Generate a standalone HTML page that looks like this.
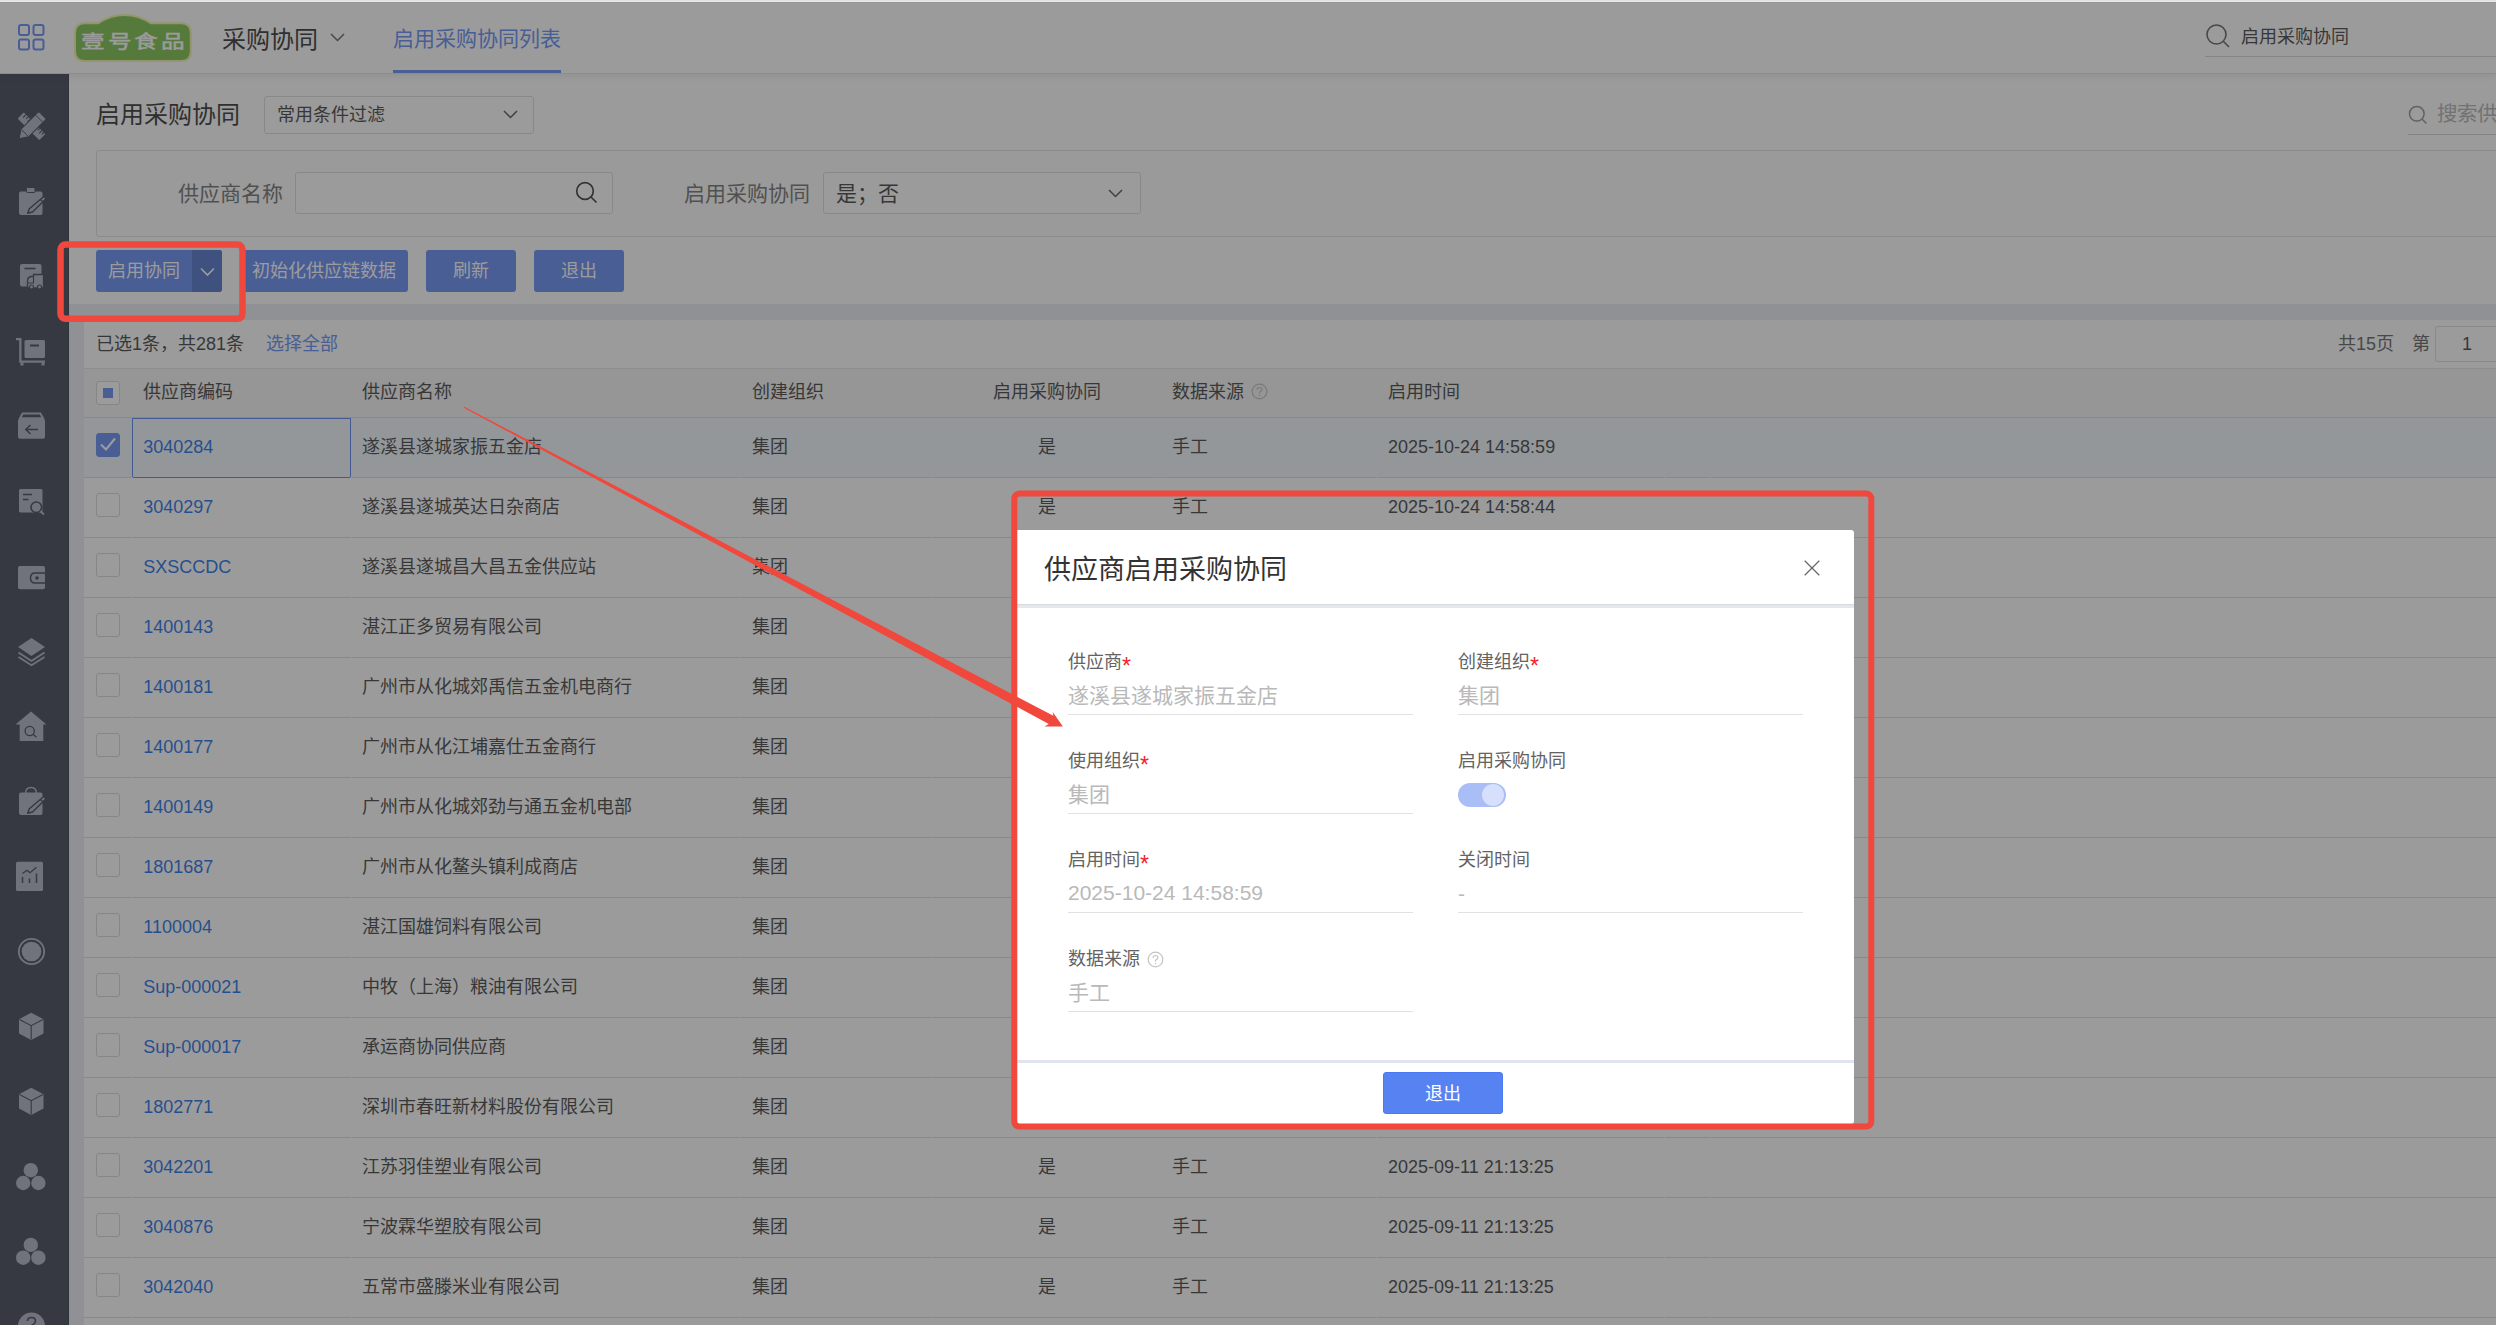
<!DOCTYPE html>
<html lang="zh-CN">
<head>
<meta charset="utf-8">
<title>启用采购协同</title>
<style>
*{box-sizing:border-box;margin:0;padding:0}
html,body{width:2496px;height:1325px;overflow:hidden}
body{position:relative;background:#e8eaf2;font-family:"Liberation Sans",sans-serif;font-size:18px;color:#333;line-height:1}
.abs{position:absolute}
.t{position:absolute;white-space:nowrap;line-height:24px;height:24px}
#strip{left:0;top:0;width:2496px;height:2px;background:linear-gradient(#e1e3e0 50%,#e6e8e5 50%);z-index:50}
#hdr{left:0;top:2px;width:2496px;height:72px;background:#fff;border-top:1px solid #f5f5f5;border-bottom:1px solid #e0e0e0;box-shadow:0 2px 8px rgba(0,0,0,.09);z-index:3}
#side{left:0;top:74px;width:69px;height:1251px;background:#303648;z-index:2;border-right:1px solid #222a3c}
#side svg{position:absolute;left:0;overflow:visible}
#top{left:69px;top:74px;width:2427px;height:230px;background:#fff}
#grid{left:84px;top:320px;width:2412px;height:1005px;background:#fff}
#mask{left:0;top:2px;width:2496px;height:1323px;background:rgba(60,60,60,.512);z-index:20}
.btn{position:absolute;top:250px;height:42px;background:#5582f3;color:#fff;border-radius:3px;text-align:center;line-height:42px;font-size:18px}
.box{position:absolute;border:1px solid #d9d9d9;border-radius:3px;background:#fff}
/* table */
.hrow{position:absolute;left:84px;top:368px;width:2412px;height:50px;background:#f4f4f4;border-top:1px solid #e2e2e2;border-bottom:1px solid #d8d8d8}
.row{position:absolute;left:84px;width:2412px;height:60px;border-bottom:1px solid #d8d8d8}
.row.sel{background:#eef7fd}
.row span,.hrow span{position:absolute;white-space:nowrap;line-height:24px}
.row span{top:17px}
.hrow span{top:11px}
.c1{left:59.300px;color:#0c64e4}
.c2{left:278px}
.c3{left:668px}
.c4{left:849px;width:227px;text-align:center}
.c5{left:1088px}
.c6{left:1304px}
.cb{position:absolute;left:12px;top:15px;width:24px;height:24px;border:1px solid #d4d4d4;border-radius:3px;background:#fff}
/* modal */
#modal{left:1014px;top:530px;width:840px;height:594px;background:#fff;border-radius:3px;z-index:30}
#modal .lab{position:absolute;font-size:18px;line-height:24px;color:#636363;white-space:nowrap}
#modal .lab i{color:#f5222d;font-style:normal;font-size:23px;position:relative;top:6px;line-height:1px}
#modal .val{position:absolute;font-size:21px;line-height:28px;color:#b9b9b9;white-space:nowrap}
#modal .ul{position:absolute;height:1px;background:#e1e1e1;width:345px}
#anno{left:0;top:0;z-index:40}
</style>
</head>
<body>
<div id="strip" class="abs"></div>
<div id="hdr" class="abs"></div>
<div id="hc" class="abs" style="left:0;top:0;z-index:5">
<svg class="abs" style="left:18px;top:24px" width="27" height="27" viewBox="0 0 27 27" fill="none" stroke="#5582f3" stroke-width="2"><rect x="1" y="1" width="10" height="10" rx="2"/><rect x="15.5" y="1" width="10" height="10" rx="2"/><rect x="1" y="15.5" width="10" height="10" rx="2"/><rect x="15.5" y="15.5" width="10" height="10" rx="2"/></svg>
<svg class="abs" style="left:74px;top:13px" width="119" height="50" viewBox="0 0 119 50"><path d="M11 10.300 H24 C33 4.500 42 2 50.500 2 C60 2 68 4.500 77 10.300 H107 Q116.800 10.300 116.800 20 V38.500 Q116.800 48 107 48 H11 Q1 48 1 38.500 V20 Q1 10.300 11 10.300 Z" fill="#6fbb3c" stroke="#eef2a0" stroke-width="2"/><text transform="translate(60.300 27.900) scale(1 .78)" x="0" y="8.500" text-anchor="middle" font-family="'Liberation Serif',serif" font-size="23.600" fill="#fff" stroke="#fff" stroke-width=".55" letter-spacing="3.200">壹号食品</text></svg>
<div class="t" style="left:222px;top:28px;font-size:24px;color:#222">采购协同</div>
<svg class="abs" style="left:330px;top:33px" width="15" height="9" viewBox="0 0 15 9" fill="none" stroke="#555" stroke-width="1.5"><path d="M1 1 L7.500 7.500 L14 1"/></svg>
<div class="t" style="left:393px;top:27px;font-size:21px;color:#5582f3">启用采购协同列表</div>
<div class="abs" style="left:393px;top:70px;width:168px;height:3px;background:#5582f3"></div>
<svg class="abs" style="left:2205px;top:23px" width="26" height="26" viewBox="0 0 26 26" fill="none" stroke="#555" stroke-width="1.600"><circle cx="11.500" cy="11.500" r="9.500"/><path d="M18.500 18.500 L24 24"/></svg>
<div class="t" style="left:2241px;top:25px;font-size:18px;color:#333">启用采购协同</div>
<div class="abs" style="left:2205px;top:56px;width:291px;height:1px;background:#d0d0d0"></div>
</div>
<div id="side" class="abs"><svg width="69" height="1251" viewBox="0 74 69 1251" fill="#a7adbf" stroke="none">
<!-- 1 ruler + pencil -->
<g transform="translate(31.500 126.300) scale(.9)">
 <g transform="rotate(45)"><rect x="-17" y="-4.800" width="34" height="9.600" rx="1"/><g stroke="#303648" stroke-width="1.300"><path d="M-13.500 -4.800v4.500M-10 -4.800v3M-6.500 -4.800v4.500M8 -4.800v3M11.500 -4.800v4.500M14.500 -4.800v3"/></g></g>
 <g transform="rotate(-45)"><path d="M-19.500 0 L-10.500 -6 H16 Q17.500 -6 17.500 -4.500 V4.500 Q17.500 6 16 6 H-10.500 Z" stroke="#303648" stroke-width="1.200"/><path d="M-10.500 -5.500 V5.500 M12 -5.500 V5.500" stroke="#303648" stroke-width="1" fill="none"/></g>
</g>
<!-- 2 clipboard + pencil -->
<g><rect x="19" y="191.500" width="23.500" height="23.500" rx="2"/><rect x="26.500" y="187.500" width="8.500" height="5" rx="1" stroke="#303648" stroke-width="1"/>
 <path d="M43.800 196.500 L46 198.700 L32.500 212 L27.800 213.300 L29.300 208.800 Z" fill="#a7adbf" stroke="#303648" stroke-width="1.500" stroke-linejoin="round"/><path d="M40.500 199.500l2.300 2.300" stroke="#303648" stroke-width="1.200"/></g>
<!-- 3 doc + truck -->
<g><rect x="20" y="264" width="21.500" height="22.500" rx="2"/><path d="M24.500 268.500h11" stroke="#303648" stroke-width="1.600"/>
 <path d="M27.500 288 V281 Q27.500 276.500 32 276.500 H33.500 V274.500 H43.500 V288 Z" fill="#a7adbf" stroke="#303648" stroke-width="1.300"/><path d="M33.500 276.500V283H28" stroke="#303648" stroke-width="1.100" fill="none"/><circle cx="31.500" cy="287" r="2" stroke="#303648" stroke-width="1.100"/><circle cx="39.500" cy="287" r="2" stroke="#303648" stroke-width="1.100"/></g>
<!-- 4 cart -->
<g><path d="M16 338h5.500v22.500H45v2.300H19.200V340.300H16z"/><rect x="24.500" y="340" width="20.500" height="18" rx="1.500"/><path d="M30 345.500h9" stroke="#303648" stroke-width="2"/><rect x="20.500" y="362.500" width="3" height="3"/><rect x="41.500" y="362.500" width="3" height="3"/></g>
<!-- 5 box arrow -->
<g><path d="M22 412.500 H41 L44.500 419 H18.500 Z"/><path d="M23.300 414.500 H39.700 L41.200 417.300 H21.800 Z" fill="#303648"/><rect x="18" y="418.800" width="27" height="20" rx="2"/><path d="M38 429.500H26M30.500 425l-4.700 4.500 4.700 4.500" stroke="#303648" stroke-width="1.500" fill="none"/></g>
<!-- 6 doc search -->
<g><rect x="19" y="489" width="23.500" height="23.500" rx="1.500"/><path d="M23 494.500h9M23 499.500h5.500" stroke="#303648" stroke-width="1.500"/><circle cx="36.300" cy="507.300" r="5.300" fill="#a7adbf" stroke="#303648" stroke-width="1.600"/><path d="M40.300 511.300 L44 514.500" stroke="#a7adbf" stroke-width="2"/></g>
<!-- 7 wallet -->
<g><rect x="18" y="566" width="27" height="23.300" rx="2"/><path d="M46 573 H35 Q30.500 573 30.500 578 Q30.500 583 35 583 H46" fill="none" stroke="#303648" stroke-width="1.500"/><circle cx="37" cy="578" r="1.800" fill="#303648"/></g>
<!-- 8 layers -->
<g><path d="M31.500 638 L45 647 L31.500 656 L18 647 Z"/><path d="M18.500 652.500 L31.500 661 L44.500 652.500 M18.500 657 L31.500 665.300 L44.500 657" fill="none" stroke="#a7adbf" stroke-width="1.800"/></g>
<!-- 9 house search -->
<g><path d="M31 711.500 L46.500 724.500 H43.300 V741 H19.700 V724.500 H15.500 Z"/><circle cx="29.700" cy="731" r="4.600" fill="none" stroke="#303648" stroke-width="1.300"/><path d="M33 734.300l3.500 3" stroke="#303648" stroke-width="1.300"/></g>
<!-- 10 bag pencil -->
<g><path d="M25.500 793.500 Q25.500 787.600 31 787.600 Q36.500 787.600 36.500 793.500" fill="none" stroke="#a7adbf" stroke-width="1.500"/><rect x="19" y="792.500" width="23.500" height="22.500" rx="2"/>
 <path d="M43.800 796.500 L46 798.700 L32.500 812 L27.800 813.300 L29.300 808.800 Z" fill="#a7adbf" stroke="#303648" stroke-width="1.500" stroke-linejoin="round"/><path d="M40.500 799.500l2.300 2.300" stroke="#303648" stroke-width="1.200"/></g>
<!-- 11 chart -->
<g><rect x="16" y="861.700" width="27" height="29.300" rx="1.500"/><path d="M22.500 873.500l4.500-3.300 3 2.500 6.500-5.500" fill="none" stroke="#303648" stroke-width="1.300"/><path d="M22.500 877v6M29.500 878.500v4.500M36.500 873.500v9.500" stroke="#303648" stroke-width="1.500"/></g>
<!-- 12 ring -->
<g><circle cx="31.500" cy="951.500" r="12.700" fill="none" stroke="#a7adbf" stroke-width="1.800"/><circle cx="31.500" cy="951.500" r="9.800"/></g>
<!-- 13,14 cube -->
<g id="cube"><path d="M31.200 1012.700 L43.500 1019.200 V1033.500 L31.200 1040 L19 1033.500 V1019.200 Z"/><path d="M19.500 1019.500 L31.200 1025.700 L43 1019.500 M31.200 1025.700 V1039.500" fill="none" stroke="#303648" stroke-width="1.100"/></g>
<use href="#cube" y="75"/>
<!-- 15,16 circles -->
<g id="tri"><circle cx="30.800" cy="1170.200" r="7.200"/><circle cx="23.200" cy="1183" r="7.200"/><circle cx="38.400" cy="1183" r="7.200"/></g>
<use href="#tri" y="74.700"/>
<!-- 17 question -->
<g><circle cx="31.500" cy="1326" r="13.500"/><path d="M27.500 1321 Q27.500 1317.500 31.500 1317.500 Q35.500 1317.500 35.500 1321 Q35.500 1323.500 31.500 1325.500" fill="none" stroke="#303648" stroke-width="1.600"/></g>
</svg></div>
<div id="top" class="abs"></div>
<div id="tc" class="abs" style="left:0;top:0;z-index:5">
<div class="t" style="left:96px;top:103px;font-size:24px;color:#212121">启用采购协同</div>
<div class="box" style="left:264px;top:96px;width:270px;height:38px"></div>
<div class="t" style="left:277px;top:103px;font-size:18px;color:#333">常用条件过滤</div>
<svg class="abs" style="left:503px;top:110px" width="15" height="9" viewBox="0 0 15 9" fill="none" stroke="#444" stroke-width="1.500"><path d="M1 1 L7.500 7.500 L14 1"/></svg>
<svg class="abs" style="left:2408px;top:105px" width="20" height="20" viewBox="0 0 20 20" fill="none" stroke="#8a8a8a" stroke-width="1.500"><circle cx="8.800" cy="8.800" r="7.300"/><path d="M14.200 14.200 L18.500 18.500"/></svg>
<div class="t" style="left:2437px;top:102px;font-size:20.500px;color:#aaa">搜索供应商编码</div>
<div class="abs" style="left:2408px;top:134px;width:88px;height:1px;background:#d0d0d0"></div>
<div class="abs" style="left:96px;top:150px;width:2410px;height:87px;border:1px solid #dcdcdc;border-radius:3px;background:#fdfdfd"></div>
<div class="t" style="left:178px;top:182px;font-size:21px;color:#666">供应商名称</div>
<div class="box" style="left:295px;top:172px;width:318px;height:42px"></div>
<svg class="abs" style="left:575px;top:181px" width="23" height="23" viewBox="0 0 23 23" fill="none" stroke="#2c2c2c" stroke-width="1.700"><circle cx="10" cy="10" r="8.300"/><path d="M16 16 L21.500 21.500"/></svg>
<div class="t" style="left:684px;top:182px;font-size:21px;color:#666">启用采购协同</div>
<div class="box" style="left:823px;top:172px;width:318px;height:42px"></div>
<div class="t" style="left:836px;top:182px;font-size:21px;color:#333">是；否</div>
<svg class="abs" style="left:1108px;top:189px" width="15" height="9" viewBox="0 0 15 9" fill="none" stroke="#444" stroke-width="1.500"><path d="M1 1 L7.500 7.500 L14 1"/></svg>
<div class="btn" style="left:96px;width:126px;text-align:left;padding-left:12px">启用协同</div>
<div class="abs" style="left:192px;top:250px;width:30px;height:42px;background:#4267c3;border-radius:0 3px 3px 0"></div>
<svg class="abs" style="left:200px;top:267px" width="15" height="10" viewBox="0 0 15 10" fill="none" stroke="#fff" stroke-width="1.700"><path d="M1 1.500 L7.500 8 L14 1.500"/></svg>
<div class="btn" style="left:240px;width:168px">初始化供应链数据</div>
<div class="btn" style="left:426px;width:90px">刷新</div>
<div class="btn" style="left:534px;width:90px">退出</div>
</div>
<div id="grid" class="abs"></div>
<div id="gc" class="abs" style="left:0;top:0;z-index:5">
<div class="t" style="left:96px;top:332px;font-size:18px;color:#333">已选1条，共281条</div>
<div class="t" style="left:266px;top:332px;font-size:18px;color:#5582f3">选择全部</div>
<div class="t" style="left:2338px;top:332px;font-size:18px;color:#555">共15页</div>
<div class="t" style="left:2412px;top:332px;font-size:18px;color:#555">第</div>
<div class="box" style="left:2435px;top:326px;width:80px;height:36px"></div>
<div class="t" style="left:2462px;top:332px;font-size:18px;color:#333">1</div>
<div class="hrow"><div class="cb" style="top:12px"><div style="position:absolute;left:6px;top:6px;width:10px;height:10px;background:#5582f3"></div></div><span style="left:59px">供应商编码</span><span style="left:278px">供应商名称</span><span style="left:668px">创建组织</span><span class="c4">启用采购协同</span><span style="left:1088px">数据来源</span><svg style="position:absolute;left:1167px;top:13.500px" width="17" height="17" viewBox="0 0 17 17" fill="none" stroke="#bbb" stroke-width="1.200"><circle cx="8.500" cy="8.500" r="7.300"/><path d="M6 6.800 Q6 4.500 8.500 4.500 Q11 4.500 11 6.600 Q11 8 8.500 9.300 V10.500 M8.500 12 v1.300"/></svg><span style="left:1304px">启用时间</span></div>
<div class="row sel" style="top:418px"><div class="cb" style="top:15px;background:#5582f3;border-color:#5582f3"><svg style="position:absolute;left:1.500px;top:2px" width="18" height="16" viewBox="0 0 18 16" fill="none" stroke="#fff" stroke-width="2.100"><path d="M2 8.500 L7 13.500 L16 2.500"/></svg></div><div style="position:absolute;left:48px;top:0;width:219px;height:60px;border:1px solid #4a7af0"></div><span class="c1">3040284</span><span class="c2">遂溪县遂城家振五金店</span><span class="c3">集团</span><span class="c4">是</span><span class="c5">手工</span><span class="c6">2025-10-24 14:58:59</span></div>
<div class="row" style="top:478px"><div class="cb"></div><span class="c1">3040297</span><span class="c2">遂溪县遂城英达日杂商店</span><span class="c3">集团</span><span class="c4">是</span><span class="c5">手工</span><span class="c6">2025-10-24 14:58:44</span></div>
<div class="row" style="top:538px"><div class="cb"></div><span class="c1">SXSCCDC</span><span class="c2">遂溪县遂城昌大昌五金供应站</span><span class="c3">集团</span><span class="c4">是</span><span class="c5">手工</span><span class="c6">2025-10-24 14:58:31</span></div>
<div class="row" style="top:598px"><div class="cb"></div><span class="c1">1400143</span><span class="c2">湛江正多贸易有限公司</span><span class="c3">集团</span><span class="c4">是</span><span class="c5">手工</span><span class="c6">2025-10-24 14:58:18</span></div>
<div class="row" style="top:658px"><div class="cb"></div><span class="c1">1400181</span><span class="c2">广州市从化城郊禹信五金机电商行</span><span class="c3">集团</span><span class="c4">是</span><span class="c5">手工</span><span class="c6">2025-10-24 14:58:05</span></div>
<div class="row" style="top:718px"><div class="cb"></div><span class="c1">1400177</span><span class="c2">广州市从化江埔嘉仕五金商行</span><span class="c3">集团</span><span class="c4">是</span><span class="c5">手工</span><span class="c6">2025-10-24 14:57:52</span></div>
<div class="row" style="top:778px"><div class="cb"></div><span class="c1">1400149</span><span class="c2">广州市从化城郊劲与通五金机电部</span><span class="c3">集团</span><span class="c4">是</span><span class="c5">手工</span><span class="c6">2025-10-24 14:57:40</span></div>
<div class="row" style="top:838px"><div class="cb"></div><span class="c1">1801687</span><span class="c2">广州市从化鳌头镇利成商店</span><span class="c3">集团</span><span class="c4">是</span><span class="c5">手工</span><span class="c6">2025-10-24 14:57:28</span></div>
<div class="row" style="top:898px"><div class="cb"></div><span class="c1">1100004</span><span class="c2">湛江国雄饲料有限公司</span><span class="c3">集团</span><span class="c4">是</span><span class="c5">手工</span><span class="c6">2025-10-24 14:57:15</span></div>
<div class="row" style="top:958px"><div class="cb"></div><span class="c1">Sup-000021</span><span class="c2">中牧（上海）粮油有限公司</span><span class="c3">集团</span><span class="c4">是</span><span class="c5">手工</span><span class="c6">2025-09-11 21:13:25</span></div>
<div class="row" style="top:1018px"><div class="cb"></div><span class="c1">Sup-000017</span><span class="c2">承运商协同供应商</span><span class="c3">集团</span><span class="c4">是</span><span class="c5">手工</span><span class="c6">2025-09-11 21:13:25</span></div>
<div class="row" style="top:1078px"><div class="cb"></div><span class="c1">1802771</span><span class="c2">深圳市春旺新材料股份有限公司</span><span class="c3">集团</span><span class="c4">是</span><span class="c5">手工</span><span class="c6">2025-09-11 21:13:25</span></div>
<div class="row" style="top:1138px"><div class="cb"></div><span class="c1">3042201</span><span class="c2">江苏羽佳塑业有限公司</span><span class="c3">集团</span><span class="c4">是</span><span class="c5">手工</span><span class="c6">2025-09-11 21:13:25</span></div>
<div class="row" style="top:1198px"><div class="cb"></div><span class="c1">3040876</span><span class="c2">宁波霖华塑胶有限公司</span><span class="c3">集团</span><span class="c4">是</span><span class="c5">手工</span><span class="c6">2025-09-11 21:13:25</span></div>
<div class="row" style="top:1258px"><div class="cb"></div><span class="c1">3042040</span><span class="c2">五常市盛滕米业有限公司</span><span class="c3">集团</span><span class="c4">是</span><span class="c5">手工</span><span class="c6">2025-09-11 21:13:25</span></div>
<div class="row" style="top:1318px"><div class="cb"></div><span class="c1">3042041</span><span class="c2"></span><span class="c3"></span><span class="c4"></span><span class="c5"></span><span class="c6"></span></div>
<div class="abs" style="left:131px;top:418px;width:2px;height:907px;background:repeating-linear-gradient(to bottom,transparent 0 59px,#ebebeb 59px 60px)"></div><div class="abs" style="left:350px;top:418px;width:2px;height:907px;background:repeating-linear-gradient(to bottom,transparent 0 59px,#ebebeb 59px 60px)"></div><div class="abs" style="left:740px;top:418px;width:2px;height:907px;background:repeating-linear-gradient(to bottom,transparent 0 59px,#ebebeb 59px 60px)"></div><div class="abs" style="left:932px;top:418px;width:2px;height:907px;background:repeating-linear-gradient(to bottom,transparent 0 59px,#ebebeb 59px 60px)"></div><div class="abs" style="left:1159px;top:418px;width:2px;height:907px;background:repeating-linear-gradient(to bottom,transparent 0 59px,#ebebeb 59px 60px)"></div><div class="abs" style="left:1376px;top:418px;width:2px;height:907px;background:repeating-linear-gradient(to bottom,transparent 0 59px,#ebebeb 59px 60px)"></div><div class="abs" style="left:1664px;top:418px;width:2px;height:907px;background:repeating-linear-gradient(to bottom,transparent 0 59px,#ebebeb 59px 60px)"></div><div class="abs" style="left:1709px;top:418px;width:2px;height:907px;background:repeating-linear-gradient(to bottom,transparent 0 59px,#ebebeb 59px 60px)"></div></div>
<div id="mask" class="abs"></div>
<div id="modal" class="abs">
<div class="abs" style="left:30px;top:22px;font-size:27px;line-height:36px;color:#333;white-space:nowrap">供应商启用采购协同</div>
<svg class="abs" style="left:789.500px;top:30px" width="16" height="16" viewBox="0 0 16 16" fill="none" stroke="#666" stroke-width="1.250"><path d="M0.700 0.700 L15.300 15.300 M15.300 0.700 L0.700 15.300"/></svg>
<div class="abs" style="left:0;top:74px;width:840px;height:4px;background:linear-gradient(#dadada 25%,#e2e7f0 25%)"></div>
<div class="lab" style="left:54px;top:119.5px">供应商<i>*</i></div><div class="val" style="left:54px;top:151.5px">遂溪县遂城家振五金店</div><div class="ul" style="left:54px;top:184.0px"></div>
<div class="lab" style="left:444px;top:119.5px">创建组织<i>*</i></div><div class="val" style="left:444px;top:151.5px">集团</div><div class="ul" style="left:444px;top:184.0px"></div>
<div class="lab" style="left:54px;top:218.5px">使用组织<i>*</i></div><div class="val" style="left:54px;top:250.5px">集团</div><div class="ul" style="left:54px;top:283.0px"></div>
<div class="lab" style="left:444px;top:218.5px">启用采购协同</div>
<div class="abs" style="left:444px;top:253px;width:48px;height:24px;border-radius:12px;background:#a9bdf7"><div style="position:absolute;right:2px;top:1px;width:22px;height:22px;border-radius:11px;background:#d6dffb"></div></div>
<div class="lab" style="left:54px;top:317.5px">启用时间<i>*</i></div><div class="val" style="left:54px;top:348.500px">2025-10-24 14:58:59</div><div class="ul" style="left:54px;top:382.0px"></div>
<div class="lab" style="left:444px;top:317.5px">关闭时间</div><div class="val" style="left:444px;top:349.5px">-</div><div class="ul" style="left:444px;top:382.0px"></div>
<div class="lab" style="left:54px;top:416.5px">数据来源</div><svg style="position:absolute;left:133px;top:420.5px" width="17" height="17" viewBox="0 0 17 17" fill="none" stroke="#c4c4c4" stroke-width="1.200"><circle cx="8.500" cy="8.500" r="7.300"/><path d="M6 6.800 Q6 4.500 8.500 4.500 Q11 4.500 11 6.600 Q11 8 8.500 9.300 V10.500 M8.500 12 v1.300"/></svg><div class="val" style="left:54px;top:448.5px">手工</div><div class="ul" style="left:54px;top:481.0px"></div>
<div class="abs" style="left:0;top:530px;width:840px;height:3px;background:#e0e4ee"></div>
<div class="abs" style="left:369px;top:542px;width:120px;height:42px;border-radius:3px;background:#5782f1;border:1px solid #4a7af3;color:#fff;font-size:18px;line-height:43px;text-align:center">退出</div>
</div>
<svg id="anno" class="abs" width="2496" height="1325" viewBox="0 0 2496 1325"><g fill="none" stroke="#f0483c" stroke-width="6.500"><rect x="60.500" y="244.600" width="182" height="74.200" rx="5"/><rect x="1014.300" y="493.600" width="857" height="633" rx="5" stroke-width="6"/></g><polygon points="463.8,407.7 1048.8,724.1 1044.5,726.5 1062.9,726.4 1052.7,711.9 1053.3,715.7 464.4,406.7" fill="#f0483c"/></svg>
</body>
</html>
